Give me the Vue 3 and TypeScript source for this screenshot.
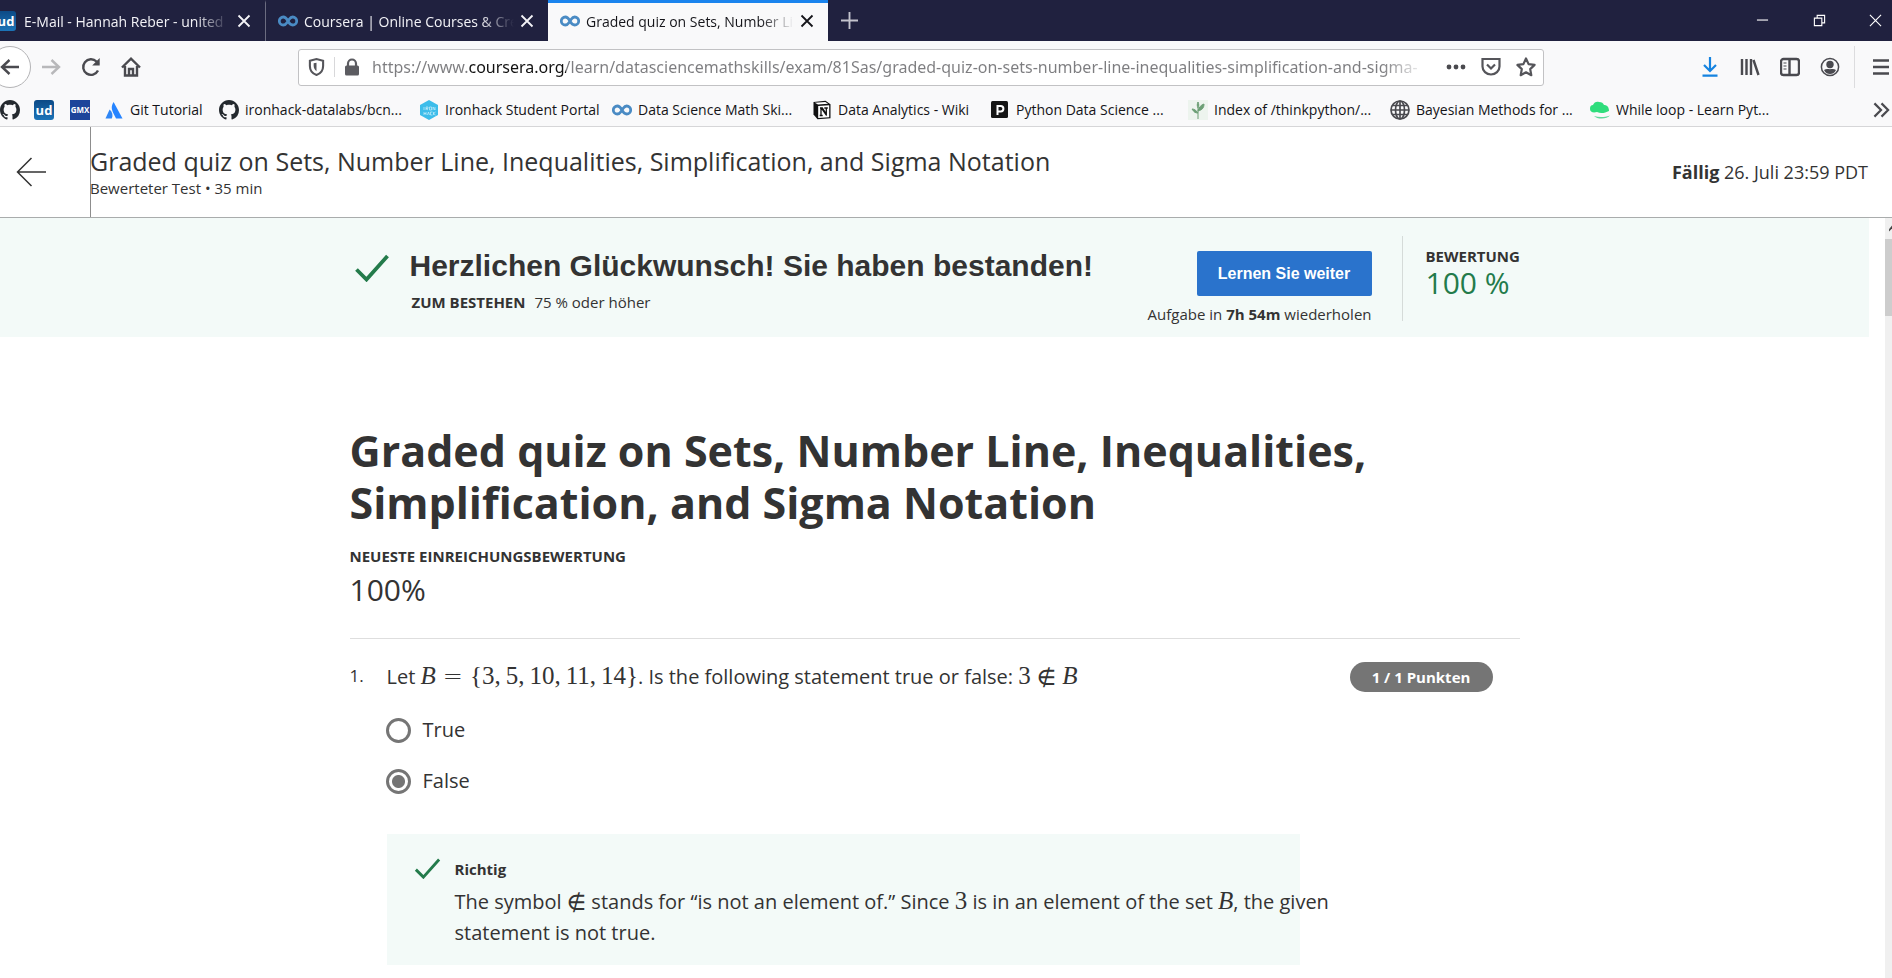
<script setup lang="ts">
import { ref } from 'vue'

interface Tab {
  id: string
  icon: string
  title: string
  active: boolean
}

interface Bookmark {
  icon: string
  label: string
  name: string
}

const tabs: Tab[] = [
  { id: 'mail', icon: 'ud', title: 'E-Mail - Hannah Reber - united', active: false },
  { id: 'home', icon: 'coursera', title: 'Coursera | Online Courses & Cre', active: false },
  { id: 'quiz', icon: 'coursera', title: 'Graded quiz on Sets, Number Li', active: true },
]

const bookmarks: Bookmark[] = [
  { icon: 'github', label: '', name: 'GitHub' },
  { icon: 'ud', label: '', name: 'united-domains' },
  { icon: 'gmx', label: '', name: 'GMX' },
  { icon: 'atlassian', label: 'Git Tutorial', name: 'Git Tutorial' },
  { icon: 'github', label: 'ironhack-datalabs/bcn...', name: 'ironhack-datalabs' },
  { icon: 'ironhack', label: 'Ironhack Student Portal', name: 'Ironhack' },
  { icon: 'coursera', label: 'Data Science Math Ski...', name: 'Data Science Math Skills' },
  { icon: 'notion', label: 'Data Analytics - Wiki', name: 'Data Analytics' },
  { icon: 'packt', label: 'Python Data Science ...', name: 'Python Data Science' },
  { icon: 'plant', label: 'Index of /thinkpython/...', name: 'thinkpython' },
  { icon: 'globe', label: 'Bayesian Methods for ...', name: 'Bayesian Methods' },
  { icon: 'cap', label: 'While loop - Learn Pyt...', name: 'While loop' },
]

const url = ref(
  'https://www.coursera.org/learn/datasciencemathskills/exam/81Sas/graded-quiz-on-sets-number-line-inequalities-simplification-and-sigma-',
)
const answers = ['True', 'False']
const answer = ref('False')
const title = 'Graded quiz on Sets, Number Line, Inequalities, Simplification, and Sigma Notation'
</script>

<template>
  <div class="window">
    <svg class="sprite" aria-hidden="true">
      <symbol id="coursera" viewBox="0 0 20 20">
        <path d="M10 10C8.600 7.400 7.400 6 5.300 6a4 4 0 0 0 0 8c1.600 0 2.600-.8 3.600-2.300L11.200 8.200C12.200 6.800 13.200 6 14.700 6a4 4 0 0 1 0 8c-2 0-3.300-1.200-4.300-3.300" fill="none" stroke="#4a8bc4" stroke-width="2.800" />
      </symbol>
      <symbol id="github" viewBox="0 0 16 16">
        <path fill="#24292e" fill-rule="evenodd" d="M8 0C3.580 0 0 3.580 0 8c0 3.540 2.290 6.530 5.470 7.590.4.070.55-.17.55-.38 0-.19-.01-.82-.01-1.490-2.010.37-2.530-.49-2.690-.94-.09-.23-.48-.94-.82-1.130-.28-.15-.68-.52-.01-.53.63-.01 1.080.58 1.230.82.72 1.210 1.870.87 2.330.66.070-.52.28-.87.51-1.070-1.780-.2-3.640-.89-3.640-3.950 0-.87.31-1.590.82-2.150-.08-.2-.36-1.020.08-2.120 0 0 .67-.21 2.200.82.640-.18 1.320-.27 2-.27s1.360.09 2 .27c1.530-1.040 2.200-.82 2.200-.82.44 1.100.16 1.920.08 2.120.51.56.82 1.270.82 2.150 0 3.070-1.870 3.750-3.650 3.950.29.25.54.73.54 1.480 0 1.070-.01 1.930-.01 2.200 0 .21.15.46.55.38A8.010 8.010 0 0 0 16 8c0-4.420-3.580-8-8-8z" />
      </symbol>
      <symbol id="atlassian" viewBox="0 0 20 20">
        <path d="M5.600 9.500 1.500 18.500h6.300c1.400-3 .7-6.600-2.200-9z" fill="#2f86f5" />
        <path d="M9.600 2C7 6 7.500 9.400 9 12.500l3 6h6.500z" fill="#2684ff" />
      </symbol>
      <symbol id="ironhack" viewBox="0 0 20 20">
        <path d="m10 0 9 5v10l-9 5-9-5V5z" fill="#3dbdea" />
        <path d="M5 7v3M7 10V7h2v1.500H7l2 1.500M10.500 7h2v3h-2zM14 10V7l2 3V7M5 12v3m0-1.500h2M7 12v3m1.500 0 1-3 1 3m3-3h-2v3h2m1-3v3m2-3-2 1.500 2 1.500" stroke="#c8eefa" stroke-width=".7" fill="none" />
      </symbol>
      <symbol id="notion" viewBox="0 0 20 20">
        <path d="M1.500 2 13.500.8 18.500 4.200v14L5.500 19.200 1.500 14.500z" fill="#111" />
        <path d="M2.800 2.700 13.300 1.900l2.800 1.900L6 4.600zM6.200 6l11-.7v12l-11 .7z" fill="#fff" />
        <path d="M8 8h2.300l4 6V8M14.300 15.500V8m-2 0h3.500M9 8v7.500m-1.300 0h3M9.500 8.200l4.800 7" stroke="#111" stroke-width="1.300" fill="none" />
      </symbol>
      <symbol id="packt" viewBox="0 0 20 20">
        <rect x="1" y="1" width="17" height="17" rx="1.500" fill="#161616" />
        <path d="M7.500 15V6h3.200a2.600 2.600 0 0 1 0 5.400H7.500" stroke="#fff" stroke-width="2" fill="none" />
      </symbol>
      <symbol id="plant" viewBox="0 0 20 20">
        <rect width="20" height="20" fill="#edf4ee" />
        <path d="M10 19V8m0 5c-2-3-4-4-6-4 2 3 3 4 6 4zm0-2c1-4 3-6 6-7 0 4-2 6-6 7zm0-3c-1-2-1-4 0-6 1 2 1 4 0 6z" fill="#6c9f75" stroke="#6c9f75" stroke-width="1" />
      </symbol>
      <symbol id="globe" viewBox="0 0 20 20">
        <g fill="none" stroke="#4a4a4f" stroke-width="1.700">
          <circle cx="10" cy="10" r="9" />
          <ellipse cx="10" cy="10" rx="4.500" ry="9" />
          <path d="M1 10h18M10 1v18M2.500 5.500h15M2.500 14.500h15" />
        </g>
      </symbol>
      <symbol id="cap" viewBox="0 0 20 20">
        <path d="M0 9c0-3 1-4 3-4 1-3 4-4 6-3 3 0 4 1 5 3 3 0 5 2 5 6-4 2-8 3-12 1-4 1-7 0-7-3z" fill="#2fdd7c" />
        <path d="M4 16c5 1.500 10 1.500 16-.5-3 4-13 4-16 .5z" fill="#5fd99a" />
      </symbol>
      <symbol id="close" viewBox="0 0 14 14">
        <path d="m1.500 1.500 11 11m0-11-11 11" fill="none" stroke="currentColor" stroke-width="1.800" />
      </symbol>
      <symbol id="tick" viewBox="0 0 34 28">
        <path d="M1.500 15.500 11.500 25.500 32.500 2" fill="none" stroke="#237b4b" stroke-width="3.800" />
      </symbol>
    </svg>

    <nav class="tabs" aria-label="Tabs">
      <div v-for="tab in tabs" :key="tab.id" class="tab" :class="{ active: tab.active }">
        <span v-if="tab.icon === 'ud'" class="badge-icon ud">ud</span>
        <svg v-else class="favicon"><use :href="'#' + tab.icon" /></svg>
        <span class="tab-title">{{ tab.title }}</span>
        <button class="tab-close" aria-label="Close tab"><svg><use href="#close" /></svg></button>
      </div>
      <button class="new-tab" aria-label="New tab">
        <svg viewBox="0 0 18 18"><path d="M9 0v18M0 9h18" stroke="#c3c3cd" stroke-width="2" /></svg>
      </button>
      <div class="window-controls">
        <button aria-label="Minimize"><svg viewBox="0 0 14 14"><path d="M1 6.500h12" /></svg></button>
        <button aria-label="Restore">
          <svg viewBox="0 0 14 14"><path d="M1.500 4.500h8v8h-8zM4.500 4.500v-3h8v8h-3" /></svg>
        </button>
        <button aria-label="Close"><svg viewBox="0 0 14 14"><path d="m1 1 12 12M13 1 1 13" /></svg></button>
      </div>
    </nav>

    <div class="toolbar">
      <div class="nav-buttons">
        <button class="back" aria-label="Back">
          <svg viewBox="0 0 20 20"><path d="M19 10H2m7.500-7L2 10l7.500 7" /></svg>
        </button>
        <button class="forward" aria-label="Forward">
          <svg viewBox="0 0 20 20"><path d="M1 10h17m-7.500-7L18 10l-7.500 7" /></svg>
        </button>
        <button aria-label="Reload">
          <svg viewBox="0 0 20 20"><path d="M17 13.500A7.800 7.800 0 1 1 15.500 4.500L17.500 7" /><path d="M18.700 1v7.500h-7.500z" fill="#4a4a4f" stroke="none" /></svg>
        </button>
        <button aria-label="Home">
          <svg viewBox="0 0 20 20"><path d="M1 10.500 10 1.700l9 8.800M4 9v9.500h12V9" /><path d="M8 18v-6h4v6" /></svg>
        </button>
      </div>
      <form class="address" @submit.prevent>
        <svg class="shield" viewBox="0 0 18 20">
          <path d="M2 3.500 9 1.500l7 2V9c0 4.500-2.500 8-7 9.500C4.500 17 2 13.500 2 9z" fill="none" stroke="#55555a" stroke-width="2.200" />
          <path d="M9 5.500v9c-2-1.500-3-3.500-3-6V6z" fill="#55555a" />
        </svg>
        <svg class="lock" viewBox="0 0 16 18">
          <path d="M4 8V5.500a4 4 0 0 1 8 0V8" fill="none" stroke="#5c5c61" stroke-width="2.200" />
          <rect x="1" y="7.500" width="14" height="10" rx="1.500" fill="#5c5c61" />
        </svg>
        <input v-model="url" class="url" type="text" aria-label="Address" spellcheck="false" />
        <button type="button" aria-label="Page actions">
          <svg viewBox="0 0 20 20" fill="#4a4a4f"><circle cx="3" cy="10" r="2.400" /><circle cx="10" cy="10" r="2.400" /><circle cx="17" cy="10" r="2.400" /></svg>
        </button>
        <button type="button" aria-label="Save to Pocket">
          <svg viewBox="0 0 20 20" fill="none" stroke="#55555a" stroke-width="2.200"><path d="M1.500 2h17v7.500a8.500 8 0 0 1-17 0zM6 7.500l4 4 4-4" /></svg>
        </button>
        <button type="button" aria-label="Bookmark page">
          <svg viewBox="0 0 20 20" fill="none" stroke="#55555a" stroke-width="2.200" stroke-linejoin="round"><path d="m10 1.500 2.600 5.600 6 .8-4.400 4.200 1.100 6.100L10 15.300l-5.300 2.900 1.100-6.100L1.400 7.900l6-.8z" /></svg>
        </button>
      </form>
      <div class="tools">
        <button aria-label="Downloads">
          <svg viewBox="0 0 20 20"><path d="M10 0v14m-6-6 6 6 6-6M2.500 18.700h15" stroke="#1583e0" stroke-width="2.200" fill="none" /></svg>
        </button>
        <button aria-label="Library">
          <svg viewBox="0 0 20 20"><path d="M2 2v16M6.500 2v16M11 2v16M13.500 3l5 15" /></svg>
        </button>
        <button aria-label="Sidebars">
          <svg viewBox="0 0 20 20"><rect x="1" y="2" width="18" height="16" rx="2.500" /><path d="M9.500 2v16" /><path d="M3.500 6h3m-3 3h3m-3 3h3" stroke-width="1.200" /></svg>
        </button>
        <button aria-label="Account">
          <svg viewBox="0 0 20 20"><circle cx="10" cy="10" r="8.600" stroke-width="1.500" /><circle cx="10" cy="7.500" r="3.700" fill="#4a4a4f" stroke="none" /><path d="M4 13c2-1.500 4-.8 6-.8s4-.7 6 .8c-1.500 3-3.500 4-6 4s-4.500-1-6-4z" fill="#4a4a4f" stroke="none" /></svg>
        </button>
        <button class="menu" aria-label="Menu">
          <svg viewBox="0 0 20 20"><path d="M2 3.500h16M2 10h16M2 16.500h16" /></svg>
        </button>
      </div>
    </div>

    <nav class="bookmarks" aria-label="Bookmarks">
      <a v-for="item in bookmarks" :key="item.icon + item.label" href="#" class="bookmark" :aria-label="item.name">
        <span v-if="item.icon === 'ud'" class="badge-icon ud">ud</span>
        <span v-else-if="item.icon === 'gmx'" class="badge-icon gmx">GMX</span>
        <svg v-else class="favicon"><use :href="'#' + item.icon" /></svg>
        <span v-if="item.label" class="bookmark-label">{{ item.label }}</span>
      </a>
      <button class="more" aria-label="More bookmarks">
        <svg viewBox="0 0 18 16"><path d="m1.500 1 7 7-7 7M9 1l7 7-7 7" fill="none" stroke="#4a4a4f" stroke-width="2.300" /></svg>
      </button>
    </nav>

    <header class="quiz-header">
      <a href="#" class="quiz-back" aria-label="Zurück">
        <svg viewBox="0 0 30 30"><path d="M30 15H1.500M15.500 1 1.500 15l14 14" fill="none" stroke="#333" stroke-width="1.500" /></svg>
      </a>
      <div class="quiz-name">
        <div class="quiz-title">{{ title }}</div>
        <div class="quiz-meta">Bewerteter Test • 35 min</div>
      </div>
      <div class="due"><b>Fällig</b> 26. Juli 23:59 PDT</div>
    </header>

    <div class="viewport">
      <div class="page">
        <section class="banner">
          <div class="banner-inner">
            <svg class="banner-tick"><use href="#tick" /></svg>
            <div class="result">
              <h2>Herzlichen Glückwunsch! Sie haben bestanden!</h2>
              <p><b>ZUM BESTEHEN</b><span>75 % oder höher</span></p>
            </div>
            <div class="next">
              <button class="continue">Lernen Sie weiter</button>
              <p>Aufgabe in <b>7h 54m</b> wiederholen</p>
            </div>
            <div class="grade">
              <b>BEWERTUNG</b>
              <span>100 %</span>
            </div>
          </div>
        </section>

        <main class="content">
          <h1>{{ title }}</h1>
          <div class="latest-label">NEUESTE EINREICHUNGSBEWERTUNG</div>
          <div class="latest-score">100%</div>

          <section class="question">
            <div class="number">1.</div>
            <div class="question-body">
              <div class="prompt-row">
                <p id="prompt" class="prompt">
                  Let <span class="math"><i>B</i><span class="equals">=</span>{3,<span class="item">5,</span><span class="item">10,</span><span class="item">11,</span><span class="item">14}</span></span>. Is the following statement true or false: <span class="math">3<span class="rel notin">∉</span><i>B</i></span>
                </p>
                <span class="points">1 / 1 Punkten</span>
              </div>
              <div class="answers" role="radiogroup" aria-labelledby="prompt">
                <label v-for="option in answers" :key="option" class="answer">
                  <input v-model="answer" type="radio" name="answer" :value="option" />
                  <span>{{ option }}</span>
                </label>
              </div>
              <div class="feedback">
                <svg class="feedback-tick"><use href="#tick" /></svg>
                <div class="feedback-text">
                  <b>Richtig</b>
                  <p>
                    The symbol <span class="math notin">∉</span> stands for “is not an element of.” Since <span class="math">3</span> is in an element of the set <span class="math"><i>B</i></span>, the given statement is not true.
                  </p>
                </div>
              </div>
            </div>
          </section>
        </main>
      </div>
      <div class="scrollbar">
        <div class="scroll-up"><svg viewBox="0 0 4 8"><path d="M4 0 0 5v3l4-4z" fill="#444" /></svg></div>
        <div class="thumb"></div>
      </div>
    </div>
  </div>
</template>

<style>
body {
  margin: 0;
  background: #fff;
  overflow-x: hidden;
}
</style>

<style scoped>
* {
  box-sizing: border-box;
}

.window {
  min-height: 100vh;
  display: flex;
  flex-direction: column;
  font-family: "Open Sans", "Noto Sans", sans-serif;
  color: #333;
}

.sprite {
  position: absolute;
  width: 0;
  height: 0;
}

button {
  border: 0;
  padding: 0;
  background: none;
  font: inherit;
  color: inherit;
  display: flex;
  align-items: center;
  justify-content: center;
}

p,
h1,
h2 {
  margin: 0;
}

.favicon {
  width: 20px;
  height: 20px;
  flex: none;
}

.badge-icon {
  width: 20px;
  height: 20px;
  flex: none;
  display: flex;
  align-items: center;
  justify-content: center;
  color: #fff;
  font-weight: 700;
}

.ud {
  background: linear-gradient(#0c4a86, #1c74b8);
  border-radius: 3px;
  font-size: 13px;
}

.gmx {
  background: #1c449b;
  font-size: 8px;
}

.tabs {
  display: flex;
  height: 41px;
  background: #20213f;
  color: #f3f3f7;
  font-size: 14px;
}

.tab {
  width: 282px;
  display: flex;
  align-items: center;
  gap: 6px;
  padding: 0 14px 2px 12px;
  border-top: 3px solid transparent;
}

.tab:first-child {
  width: 270px;
  margin-left: -4px;
  padding-left: 0;
  border-right: 1px solid #6b6c80;
  gap: 8px;
}

.tab.active {
  width: 280px;
  background: #f9f9fa;
  border-top-color: #1a84ee;
  color: #15151a;
}

.tab-title {
  flex: 1;
  white-space: nowrap;
  overflow: hidden;
  mask-image: linear-gradient(to right, #000 84%, transparent);
}

.tab-close svg {
  width: 14px;
  height: 14px;
}

.new-tab {
  width: 42px;
}

.new-tab svg {
  width: 17px;
  height: 17px;
}

.window-controls {
  margin-left: auto;
  display: flex;
}

.window-controls button {
  width: 57px;
}

.window-controls button:last-child {
  width: 44px;
  padding-left: 10px;
}

.window-controls svg {
  width: 13px;
  height: 13px;
  fill: none;
  stroke: #fff;
  stroke-width: 1.200;
}

.toolbar {
  display: flex;
  align-items: center;
  height: 52px;
  background: #f9f9fa;
}

.nav-buttons {
  width: 298px;
  flex: none;
  display: flex;
  align-items: center;
}

.nav-buttons button {
  width: 40px;
  height: 42px;
}

.nav-buttons svg,
.tools svg {
  width: 20px;
  height: 20px;
  fill: none;
  stroke: #4a4a4f;
  stroke-width: 2.400;
}

.nav-buttons .back {
  width: 42px;
  margin-left: -11px;
  background: #fff;
  border: 1px solid #b4b4b6;
  border-radius: 50%;
}

.nav-buttons .forward svg {
  stroke: #b8b8ba;
}

.address {
  flex: 1;
  height: 37px;
  display: flex;
  align-items: center;
  border: 1px solid #c2c2c4;
  border-radius: 3px;
  background: #fff;
}

.address button {
  width: 35px;
}

.address button svg {
  width: 20px;
  height: 20px;
}

.shield {
  width: 36px;
  height: 20px;
  padding: 0 9px;
  border-right: 1px solid #d8d8da;
  flex: none;
}

.lock {
  width: 16px;
  height: 18px;
  margin: 0 12px 0 9px;
  flex: none;
}

.url {
  flex: 1;
  min-width: 0;
  height: 35px;
  border: 0;
  padding: 0;
  outline: 0;
  font-family: "Noto Sans", "Open Sans", sans-serif;
  font-size: 16px;
  color: #111;
  background: linear-gradient(to right, #7d7d80 97px, #111 97px, #111 194px, #7d7d80 194px, #7d7d80 1010px, transparent 1054px);
  background-clip: text;
  -webkit-text-fill-color: transparent;
}

.tools {
  display: flex;
  align-items: center;
  margin-left: 146px;
}

.tools button {
  width: 40px;
  height: 42px;
}

.tools .menu {
  width: 40px;
  margin-left: 4px;
  border-left: 1px solid #dcdcde;
  padding-left: 12px;
  margin-right: -2px;
}

.bookmarks {
  display: grid;
  grid-template-columns: 34px 36px 34px 115px 200px 193px 200px 178px 198px 202px 200px 1fr 22px;
  align-items: center;
  height: 34px;
  background: #f9f9fa;
  border-bottom: 1px solid #d6d6d8;
  font-size: 14px;
}

.bookmark {
  display: flex;
  align-items: center;
  gap: 6px;
  color: #141418;
  text-decoration: none;
  white-space: nowrap;
}

.more svg {
  width: 17px;
  height: 16px;
}

.quiz-header {
  display: flex;
  align-items: center;
  height: 91px;
  background: #fff;
  border-bottom: 1px solid #a9acac;
}

.quiz-back {
  width: 91px;
  margin-right: -1px;
  align-self: stretch;
  display: flex;
  align-items: center;
  padding-left: 16px;
  border-right: 1px solid #8d8d8d;
}

.quiz-back svg {
  width: 30px;
  height: 30px;
}

.quiz-name {
  flex: 1;
  padding-bottom: 3px;
}

.quiz-title {
  font-size: 25px;
  line-height: 34px;
}

.quiz-meta {
  font-size: 15px;
  line-height: 20px;
}

.due {
  font-size: 18px;
  padding-right: 24px;
}

.viewport {
  flex: 1;
  display: flex;
}

.page {
  flex: 1;
  margin-right: 16px;
}

.scrollbar {
  width: 7px;
  background: #f0f0f0;
}

.scroll-up {
  height: 21px;
  display: flex;
  align-items: center;
  justify-content: flex-end;
}

.scroll-up svg {
  width: 3px;
  height: 7px;
}

.thumb {
  height: 77px;
  background: #cdcdcd;
}

.banner {
  background: #f3faf8;
}

.banner-inner {
  max-width: 1170px;
  margin: 0 auto;
  min-height: 119px;
  display: flex;
  align-items: flex-start;
}

.banner-tick {
  width: 34px;
  height: 28px;
  margin: 36px 21px 0 5px;
  flex: none;
}

.result {
  flex: 1;
  padding-top: 30px;
}

.result h2 {
  font-family: "Liberation Sans", Arial, sans-serif;
  font-size: 30px;
  line-height: 36px;
}

.result p {
  margin: 8px 0 0 2px;
  font-size: 15px;
  line-height: 20px;
}

.result p span {
  margin-left: 9px;
}

.next {
  display: flex;
  flex-direction: column;
  align-items: flex-end;
  padding-top: 33px;
  font-size: 15px;
  line-height: 20px;
}

.continue {
  width: 175px;
  height: 45px;
  background: #2a73cc;
  border-radius: 2px;
  color: #fff;
  font-family: "Liberation Sans", Arial, sans-serif;
  font-size: 16px;
  font-weight: 700;
}

.next p {
  margin-top: 8px;
}

.grade {
  margin: 18px 0 0 30px;
  height: 85px;
  border-left: 1px solid #d5dbd9;
  padding: 10px 0 0 23px;
  width: 118px;
  display: flex;
  flex-direction: column;
  font-size: 15px;
  line-height: 20px;
}

.grade span {
  color: #237b4b;
  font-size: 30px;
  line-height: 34px;
}

.content {
  max-width: 1170px;
  margin: 0 auto;
  padding-top: 88px;
}

h1 {
  font-size: 43px;
  line-height: 52px;
  max-width: 1060px;
}

.latest-label {
  margin-top: 16px;
  font-size: 15px;
  font-weight: 700;
  line-height: 22px;
}

.latest-score {
  margin-top: 5px;
  font-size: 30px;
  line-height: 36px;
}

.question {
  display: flex;
  margin-top: 30px;
  border-top: 1px solid #dedede;
  padding-top: 20px;
}

.number {
  width: 37px;
  flex: none;
  font-size: 17px;
  line-height: 34px;
}

.question-body {
  flex: 1;
}

.prompt-row {
  display: flex;
  justify-content: space-between;
  align-items: center;
  padding-right: 27px;
}

.prompt {
  font-size: 20px;
  line-height: 36px;
}

.math {
  font-family: "Liberation Serif", "DejaVu Serif", serif;
  font-size: 25px;
  line-height: 24px;
  white-space: nowrap;
}

.equals {
  margin: 0 7px;
  font-family: "DejaVu Sans", sans-serif;
  font-size: 24px;
  font-weight: 200;
}

.rel {
  margin: 0 6px;
}

.notin {
  font-family: "DejaVu Math TeX Gyre", "DejaVu Serif", serif;
  font-size: 24px;
  font-weight: 200;
}

.item {
  margin-left: 5px;
}

.points {
  width: 143px;
  background: #757575;
  color: #fff;
  border-radius: 15px;
  font-size: 15px;
  font-weight: 700;
  line-height: 30px;
  text-align: center;
}

.answers {
  display: flex;
  flex-direction: column;
  gap: 21px;
  margin-top: 20px;
}

.answer {
  display: flex;
  align-items: center;
  gap: 12px;
  font-size: 20px;
  line-height: 30px;
}

.answer input {
  appearance: none;
  width: 25px;
  height: 25px;
  margin: 0 0 0 -1px;
  border: 3px solid #757575;
  border-radius: 50%;
  background: #fff;
}

.answer input:checked {
  background: radial-gradient(circle, #757575 6px, #fff 7px);
}

.feedback {
  width: 913px;
  max-width: 100%;
  display: flex;
  margin-top: 38px;
  padding: 24px 0 17px 27px;
  background: #f3faf8;
}

.feedback-tick {
  width: 27px;
  height: 21px;
  margin-right: 14px;
  flex: none;
}

.feedback-text {
  flex: 1;
  margin-right: -40px;
}

.feedback-text b {
  display: block;
  font-size: 15px;
  line-height: 22px;
}

.feedback-text p {
  margin-top: 6px;
  font-size: 20px;
  line-height: 31px;
}
</style>
